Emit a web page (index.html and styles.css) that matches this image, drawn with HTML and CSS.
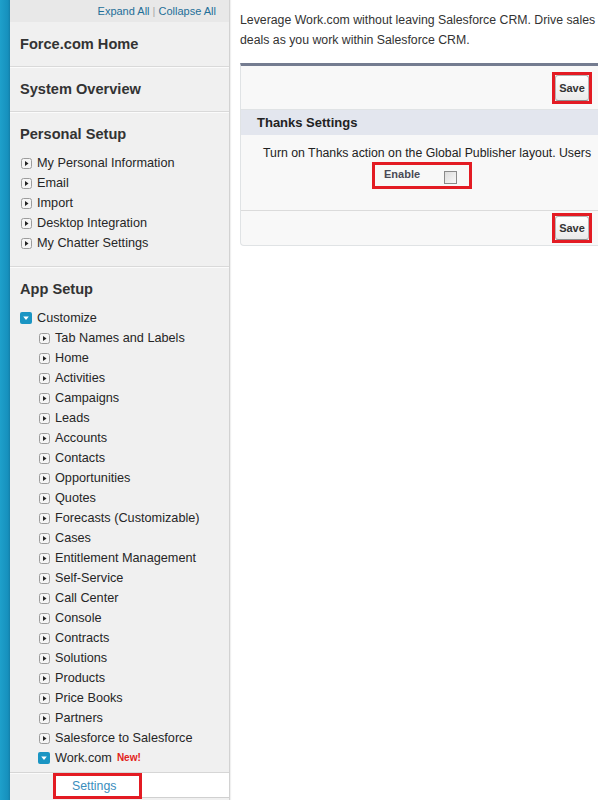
FILE: index.html
```html
<!DOCTYPE html>
<html>
<head>
<meta charset="utf-8">
<link rel="stylesheet" href="styles.css">
</head>
<body>
<svg class="defs" width="0" height="0">
  <symbol id="closed" viewBox="0 0 11 11">
    <rect x="0.5" y="0.5" width="10" height="10" rx="2" fill="#f4f4f4" stroke="#9c9c9c"/>
    <path d="M4 3 L7.5 5.5 L4 8 Z" fill="#222"/>
  </symbol>
  <symbol id="open" viewBox="0 0 12 12">
    <rect x="0" y="0" width="12" height="12" rx="2" fill="#1a95c3"/>
    <path d="M3.2 4.5 L8.8 4.5 L6 8 Z" fill="#fff"/>
  </symbol>
</svg>
<div class="stripe"></div>
<nav class="sidebar">
  <div class="sb-top"><a class="lnk">Expand All</a> <span class="sep">|</span> <a class="lnk">Collapse All</a></div>
  <div class="sb-sec"><h2>Force.com Home</h2></div>
  <div class="sb-sec"><h2>System Overview</h2></div>
  <div class="sb-sec">
    <h2>Personal Setup</h2>
    <ul class="items">
      <li><svg class="ic"><use href="#closed"/></svg>My Personal Information</li>
      <li><svg class="ic"><use href="#closed"/></svg>Email</li>
      <li><svg class="ic"><use href="#closed"/></svg>Import</li>
      <li><svg class="ic"><use href="#closed"/></svg>Desktop Integration</li>
      <li><svg class="ic"><use href="#closed"/></svg>My Chatter Settings</li>
    </ul>
  </div>
  <div class="sb-sec last">
    <h2>App Setup</h2>
    <ul class="items">
      <li><svg class="ic ic-open"><use href="#open"/></svg>Customize</li>
    </ul>
    <ul class="items sub">
      <li><svg class="ic"><use href="#closed"/></svg>Tab Names and Labels</li>
      <li><svg class="ic"><use href="#closed"/></svg>Home</li>
      <li><svg class="ic"><use href="#closed"/></svg>Activities</li>
      <li><svg class="ic"><use href="#closed"/></svg>Campaigns</li>
      <li><svg class="ic"><use href="#closed"/></svg>Leads</li>
      <li><svg class="ic"><use href="#closed"/></svg>Accounts</li>
      <li><svg class="ic"><use href="#closed"/></svg>Contacts</li>
      <li><svg class="ic"><use href="#closed"/></svg>Opportunities</li>
      <li><svg class="ic"><use href="#closed"/></svg>Quotes</li>
      <li><svg class="ic"><use href="#closed"/></svg>Forecasts (Customizable)</li>
      <li><svg class="ic"><use href="#closed"/></svg>Cases</li>
      <li><svg class="ic"><use href="#closed"/></svg>Entitlement Management</li>
      <li><svg class="ic"><use href="#closed"/></svg>Self-Service</li>
      <li><svg class="ic"><use href="#closed"/></svg>Call Center</li>
      <li><svg class="ic"><use href="#closed"/></svg>Console</li>
      <li><svg class="ic"><use href="#closed"/></svg>Contracts</li>
      <li><svg class="ic"><use href="#closed"/></svg>Solutions</li>
      <li><svg class="ic"><use href="#closed"/></svg>Products</li>
      <li><svg class="ic"><use href="#closed"/></svg>Price Books</li>
      <li><svg class="ic"><use href="#closed"/></svg>Partners</li>
      <li><svg class="ic"><use href="#closed"/></svg>Salesforce to Salesforce</li>
      <li><svg class="ic ic-open"><use href="#open"/></svg>Work.com <span class="new">New!</span></li>
    </ul>
  </div>
  <div class="settings-row"><span class="hl">Settings</span></div>
</nav>
<main class="main">
  <p class="intro">Leverage Work.com without leaving Salesforce CRM. Drive sales<br>deals as you work within Salesforce CRM.</p>
  <section class="panel">
    <div class="btn-row top"><span class="hlwrap"><button class="btn">Save</button></span></div>
    <div class="sub-head">Thanks Settings</div>
    <div class="pbody">
      <p class="desc">Turn on Thanks action on the Global Publisher layout. Users</p>
      <div class="field-row">
        <span class="field"><span class="label">Enable</span><span class="cb"></span></span>
      </div>
    </div>
    <div class="btn-row bottom"><span class="hlwrap"><button class="btn">Save</button></span></div>
  </section>
</main>
</body>
</html>
```
FILE: styles.css
```css
* { box-sizing: border-box; }
html, body { margin: 0; padding: 0; }
body {
  width: 598px;
  height: 800px;
  overflow: hidden;
  display: flex;
  align-items: stretch;
  font-family: "Liberation Sans", Arial, sans-serif;
  color: #333;
  background: #fff;
}
.defs { position: absolute; width: 0; height: 0; }
.stripe {
  flex: 0 0 10px;
  background: linear-gradient(to right, #1ea0cb, #1690bd 80%, #137fa8);
}
.sidebar {
  flex: 0 0 220px;
  background: #f0f0f0;
  border-right: 1px solid #d2d2d2;
  box-shadow: 1px 0 1px rgba(0,0,0,0.06);
  display: flex;
  flex-direction: column;
}
.sb-top {
  height: 22px;
  line-height: 22px;
  background: #e8e8e8;
  text-align: right;
  padding-right: 13px;
  font-size: 11px;
}
.lnk { color: #1f6f98; }
.sep { color: #a8a8a8; }
.sb-sec {
  border-bottom: 1px solid #d9d9d9;
  box-shadow: 0 1px 0 #fbfbfb;
  padding: 14px 10px 13px 10px;
}
.sb-sec:first-of-type { padding-top: 13px; }
.sb-sec h2 {
  margin: 0;
  font-size: 14.6px;
  line-height: 17px;
  font-weight: bold;
  color: #333;
}
.sb-sec.last { border-bottom: 1px solid #d6d6d6; padding-bottom: 4px; }
.items {
  list-style: none;
  margin: 0;
  padding: 0;
}
.sb-sec h2 + .items { margin-top: 10px; }
.items li {
  height: 20px;
  line-height: 20px;
  font-size: 12.7px;
  color: #262626;
  display: flex;
  align-items: center;
  white-space: nowrap;
}
.sub { padding-left: 18px; }
.ic {
  width: 11px;
  height: 11px;
  margin: 0 5px 0 1px;
  flex: 0 0 auto;
}
.ic-open { width: 12px; height: 12px; margin: 0 5px 0 0; }
.new {
  color: #e2231a;
  font-weight: bold;
  font-size: 10px;
  margin-left: 5px;
}
.settings-row {
  margin-left: 43px;
  height: 25px;
  background: #fff;
  border-bottom: 1px solid #d0d0d0;
  padding-top: 0;
}
.hl {
  display: inline-block;
  width: 89px;
  height: 26px;
  line-height: 20px;
  padding-left: 16px;
  font-size: 12.3px;
  color: #3a8dbd;
  border: 3px solid #e31b23;
}
.main {
  flex: 0 0 auto;
  width: 370px;
  padding-left: 10px;
}
.intro {
  margin: 10px 0 13px 0;
  font-size: 12.3px;
  line-height: 20px;
  white-space: nowrap;
  color: #333;
}
.panel {
  width: 360px;
  border-top: 3px solid #747c90;
  border-left: 1px solid #e0e3e5;
  border-bottom: 1px solid #e0e3e5;
  border-bottom-left-radius: 4px;
  background: #f8f8f8;
}
.btn-row {
  display: flex;
  justify-content: flex-end;
  align-items: center;
  padding-right: 8px;
}
.btn-row.top { height: 44px; border-bottom: 1px solid #e0e3e5; }
.btn-row.bottom { height: 35px; border-top: 1px solid #dbdbdb; padding-top: 0; }
.hlwrap {
  display: inline-flex;
  border: 3px solid #e31b23;
  padding: 0;
}
.btn {
  font-family: "Liberation Sans", Arial, sans-serif;
  font-size: 11px;
  font-weight: bold;
  color: #333;
  border: 1px solid #b5b5b5;
  border-bottom-color: #8f8f8f;
  border-radius: 3px;
  background: linear-gradient(#ffffff, #eaeaea);
  padding: 0 2px;
  width: 34px;
  height: 26px;
  margin: 0;
}
.btn-row.bottom .btn { height: 24px; }
.sub-head {
  height: 25px;
  line-height: 25px;
  background: #e3e6ee;
  padding-left: 16px;
  font-size: 13px;
  font-weight: bold;
  color: #222;
}
.pbody { padding: 10px 0 21px 22px; }
.desc {
  margin: 0;
  font-size: 12.3px;
  line-height: 16px;
  white-space: nowrap;
  color: #222;
}
.field-row { padding: 1px 0 0 109px; }
.field {
  display: inline-flex;
  align-items: center;
  width: 100px;
  height: 27px;
  padding-left: 9px;
  border: 3px solid #e31b23;
}
.label {
  font-size: 11px;
  font-weight: bold;
  color: #4a4a56;
  width: 60px;
  margin-top: -4px;
}
.cb {
  width: 13px;
  height: 13px;
  border: 1px solid #8a8a8a;
  background: linear-gradient(135deg, #dcdcdc, #f8f8f8);
  margin-top: 4px;
}
```
